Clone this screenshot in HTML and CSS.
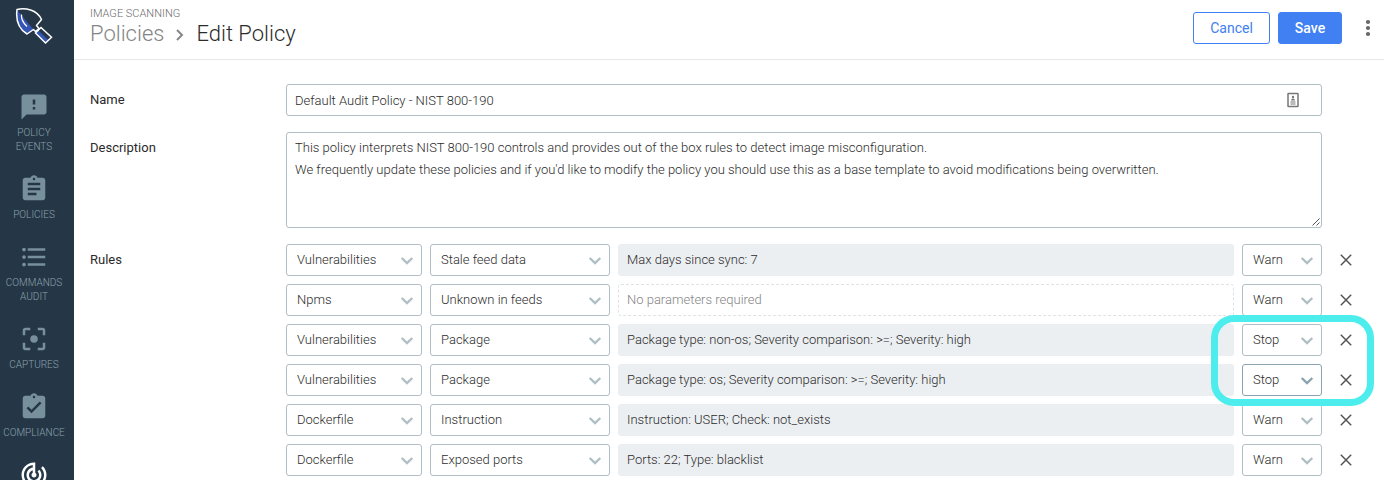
FILE: index.html
```html
<!DOCTYPE html>
<html lang="en">
<head>
<meta charset="utf-8">
<title>Edit Policy</title>
<link rel="stylesheet" href="styles.css">
</head>
<body>
<svg class="defs" width="0" height="0">
  <symbol id="chevron" viewBox="0 0 14 10"><path d="M1.700 2l5.300 5 5.300-5" fill="none" stroke="currentColor" stroke-width="2.400"/></symbol>
  <symbol id="cross" viewBox="0 0 12 12"><path d="M.8.8l10.400 10.400M11.200.8L.8 11.200" fill="none" stroke="currentColor" stroke-width="1.500"/></symbol>
</svg>
<div class="app">
  <nav class="sidebar">
    <svg class="logo" viewBox="0 0 38 38">
      <path d="M2 3L18.500 22.500L12 27C4 22 1.500 14 2 3z" fill="#3555b5"/>
      <path d="M23.200 23.200L33.500 33.200L30.500 36L20.500 26z" fill="#3555b5"/>
      <path d="M2 2.500C10 .5 22 2.500 26.500 12.500L21.500 18.500L24 21.500L20.500 24.500L18.500 22.500L12 27C4 22 .5 14 2 2.500z" fill="none" stroke="#fff" stroke-width="1.500" stroke-linejoin="round"/>
      <path d="M26 20.500L36.500 30.300L30.500 36L20.500 26z" fill="none" stroke="#fff" stroke-width="1.500"/>
      <path d="M6.500 7.500Q6 14 12 19.500" fill="none" stroke="#fff" stroke-width="1.300"/>
    </svg>
    <a class="item"><svg viewBox="0 0 24 24"><path d="M20 2H4c-1.100 0-2 .9-2 2v18l4-4h14c1.100 0 2-.9 2-2V4c0-1.100-.9-2-2-2zm-7 12h-2v-2h2v2zm0-4h-2V6h2v4z"/></svg><span>POLICY<br>EVENTS</span></a>
    <a class="item"><svg viewBox="0 0 24 24"><path d="M19 3h-4.180C14.400 1.840 13.300 1 12 1c-1.300 0-2.400.84-2.820 2H5c-1.100 0-2 .9-2 2v14c0 1.100.9 2 2 2h14c1.100 0 2-.9 2-2V5c0-1.100-.9-2-2-2zm-7 0c.55 0 1 .45 1 1s-.45 1-1 1-1-.45-1-1 .45-1 1-1zm2 14H7v-2h7v2zm3-4H7v-2h10v2zm0-4H7V7h10v2z"/></svg><span>POLICIES</span></a>
    <a class="item"><svg viewBox="0 0 24 24"><path d="M4 10.500c-.83 0-1.500.67-1.500 1.500s.67 1.500 1.500 1.500 1.500-.67 1.500-1.500-.67-1.500-1.500-1.500zm0-6c-.83 0-1.500.67-1.500 1.500S3.170 7.500 4 7.500 5.500 6.830 5.500 6 4.830 4.500 4 4.500zm0 12c-.83 0-1.500.68-1.500 1.500s.68 1.500 1.500 1.500 1.500-.68 1.500-1.500-.67-1.500-1.500-1.500zM7 19h14v-2H7v2zm0-6h14v-2H7v2zm0-8v2h14V5H7z"/></svg><span>COMMANDS<br>AUDIT</span></a>
    <a class="item"><svg viewBox="0 0 24 24"><circle cx="12" cy="12" r="3"/><path d="M5 15H3v4c0 1.100.9 2 2 2h4v-2H5v-4zM5 5h4V3H5c-1.100 0-2 .9-2 2v4h2V5zm14-2h-4v2h4v4h2V5c0-1.100-.9-2-2-2zm0 16h-4v2h4c1.100 0 2-.9 2-2v-4h-2v4z"/></svg><span>CAPTURES</span></a>
    <a class="item"><svg viewBox="0 0 24 24"><path d="M19 3h-4.180C14.400 1.840 13.300 1 12 1c-1.300 0-2.400.84-2.820 2H5c-1.100 0-2 .9-2 2v14c0 1.100.9 2 2 2h14c1.100 0 2-.9 2-2V5c0-1.100-.9-2-2-2zm-7 0c.55 0 1 .45 1 1s-.45 1-1 1-1-.45-1-1 .45-1 1-1zm-2 14l-4-4 1.410-1.410L10 14.170l6.590-6.590L18 9l-8 8z"/></svg><span>COMPLIANCE</span></a>
    <a class="item active"><svg viewBox="0 0 24 24"><path d="M19.070 4.930l-1.410 1.410C19.100 7.790 20 9.790 20 12c0 4.420-3.580 8-8 8s-8-3.580-8-8c0-4.080 3.050-7.440 7-7.930v2.020C8.160 6.570 6 9.030 6 12c0 3.310 2.690 6 6 6s6-2.690 6-6c0-1.660-.67-3.160-1.760-4.240l-1.410 1.410C15.550 9.900 16 10.900 16 12c0 2.210-1.790 4-4 4s-4-1.790-4-4c0-1.860 1.280-3.410 3-3.860v2.140c-.6.35-1 .98-1 1.720 0 1.100.9 2 2 2s2-.9 2-2c0-.74-.4-1.380-1-1.720V2h-1C6.480 2 2 6.480 2 12s4.480 10 10 10 10-4.480 10-10c0-2.760-1.120-5.260-2.930-7.070z"/></svg></a>
  </nav>
  <main class="main">
    <header class="header">
      <div class="titles">
        <div class="eyebrow">IMAGE SCANNING</div>
        <h1 class="crumbs"><span class="parent">Policies</span><svg class="sep" viewBox="0 0 8 14"><path d="M1 2l5 5-5 5" fill="none" stroke="currentColor" stroke-width="2"/></svg><span>Edit Policy</span></h1>
      </div>
      <div class="actions">
        <button class="btn">Cancel</button>
        <button class="btn primary">Save</button>
        <svg class="more" viewBox="0 0 6 18"><circle cx="3" cy="3" r="2.100"/><circle cx="3" cy="9" r="2.100"/><circle cx="3" cy="15" r="2.100"/></svg>
      </div>
    </header>
    <form class="form">
      <div class="label">Name</div>
      <div class="field name"><span>Default Audit Policy - NIST 800-190</span>
        <svg class="card" viewBox="0 0 12 16"><rect x="1" y="1.500" width="10" height="13" rx=".5" fill="#fff" stroke="#777" stroke-width="1.500"/><circle cx="6" cy="5" r="1.200" fill="#777"/><path d="M4 8.500q0-2 2-2t2 2zM3.500 9.500h5v1h-5zM3.500 11.500h5v1h-5z" fill="#777"/></svg>
      </div>
      <div class="label">Description</div>
      <div class="field description">This policy interprets NIST 800-190 controls and provides out of the box rules to detect image misconfiguration.<br>We frequently update these policies and if you'd like to modify the policy you should use this as a base template to avoid modifications being overwritten.
        <svg class="grip" viewBox="0 0 8 8"><path d="M.5 7.500l7-7M4.500 7.500l3-3" stroke="#555" fill="none"/></svg>
      </div>
      <div class="label">Rules</div>
      <div class="rules">
        <div class="rule"><div class="select"><span>Vulnerabilities</span><svg><use href="#chevron"/></svg></div><div class="select"><span>Stale feed data</span><svg><use href="#chevron"/></svg></div><div class="params">Max days since sync: 7</div><div class="select"><span>Warn</span><svg><use href="#chevron"/></svg></div><svg class="remove"><use href="#cross"/></svg></div>
        <div class="rule"><div class="select"><span>Npms</span><svg><use href="#chevron"/></svg></div><div class="select"><span>Unknown in feeds</span><svg><use href="#chevron"/></svg></div><div class="params empty">No parameters required</div><div class="select"><span>Warn</span><svg><use href="#chevron"/></svg></div><svg class="remove"><use href="#cross"/></svg></div>
        <div class="rule"><div class="select"><span>Vulnerabilities</span><svg><use href="#chevron"/></svg></div><div class="select"><span>Package</span><svg><use href="#chevron"/></svg></div><div class="params">Package type: non-os; Severity comparison: &gt;=; Severity: high</div><div class="select"><span>Stop</span><svg><use href="#chevron"/></svg></div><svg class="remove"><use href="#cross"/></svg></div>
        <div class="rule"><div class="select"><span>Vulnerabilities</span><svg><use href="#chevron"/></svg></div><div class="select"><span>Package</span><svg><use href="#chevron"/></svg></div><div class="params">Package type: os; Severity comparison: &gt;=; Severity: high</div><div class="select focused"><span>Stop</span><svg><use href="#chevron"/></svg></div><svg class="remove"><use href="#cross"/></svg></div>
        <div class="rule"><div class="select"><span>Dockerfile</span><svg><use href="#chevron"/></svg></div><div class="select"><span>Instruction</span><svg><use href="#chevron"/></svg></div><div class="params">Instruction: USER; Check: not_exists</div><div class="select"><span>Warn</span><svg><use href="#chevron"/></svg></div><svg class="remove"><use href="#cross"/></svg></div>
        <div class="rule"><div class="select"><span>Dockerfile</span><svg><use href="#chevron"/></svg></div><div class="select"><span>Exposed ports</span><svg><use href="#chevron"/></svg></div><div class="params">Ports: 22; Type: blacklist</div><div class="select"><span>Warn</span><svg><use href="#chevron"/></svg></div><svg class="remove"><use href="#cross"/></svg></div>
        <div class="highlight"></div>
      </div>
    </form>
  </main>
</div>
</body>
</html>
```
FILE: styles.css
```css
* { box-sizing: border-box; }
body { margin: 0; font-family: Roboto, sans-serif; font-size: 13px; font-weight: 300; color: #2b2b2b; background: #fff; overflow: hidden; }
.defs { position: absolute; }
.app { display: flex; height: 480px; overflow: hidden; }
.sidebar { flex: none; width: 74px; padding-right: 6px; background: #253746; display: flex; flex-direction: column; align-items: center; gap: 20px; }
.logo { width: 38px; height: 38px; margin: 7px 0 27px; flex: none; }
.item { display: flex; flex-direction: column; align-items: center; gap: 4px; flex: none; font-size: 10px; line-height: 14px; text-align: center; color: #8ba1ad; }
.item svg { width: 30px; height: 30px; fill: #78909c; }
.item.active svg { fill: #fff; }
.main { flex: 1; min-width: 0; }
.header { height: 60px; border-bottom: 1px solid #e6e8ea; padding: 6px 13px 0 16px; display: flex; justify-content: space-between; }
.titles { padding-top: 1px; }
.eyebrow { font-size: 11px; line-height: 14px; color: #6c6c6c; }
.crumbs { margin: 0; font-size: 22px; font-weight: 300; line-height: 26px; display: flex; align-items: center; }
.parent { color: #858585; }
.sep { width: 8px; height: 14px; margin: 1px 12px 0; color: #888; }
.actions { display: flex; padding-top: 6px; }
.btn { height: 32px; width: 77px; margin-right: 8px; padding: 0; border: 1px solid #4080f3; border-radius: 3px; background: #fff; color: #4080f3; font: 400 14px Roboto, sans-serif; }
.btn.primary { width: 64px; background: #4080f3; color: #fff; font-weight: 500; margin-right: 23px; }
.more { width: 6px; height: 18px; margin-top: 7px; fill: #666; }
.form { display: grid; grid-template-columns: 196px 1fr; row-gap: 16px; padding: 24px 30px 0 16px; }
.label { font-weight: 400; line-height: 32px; }
.field { width: 1036px; border: 1px solid #b0bec5; border-radius: 3px; padding: 0 8px; }
.name { height: 32px; display: flex; align-items: center; justify-content: space-between; padding-right: 22px; }
.card { width: 12px; height: 16px; }
.description { height: 96px; line-height: 22px; padding-top: 4px; position: relative; }
.grip { position: absolute; right: 1px; bottom: 1px; width: 8px; height: 8px; }
.rules { position: relative; display: flex; flex-direction: column; gap: 8px; }
.rule { display: grid; grid-template-columns: 136px 180px 616px 80px 12px; column-gap: 8px; height: 32px; align-items: center; }
.select { height: 32px; border: 1px solid #b0bec5; border-radius: 3px; padding: 0 7px 0 10px; display: flex; align-items: center; justify-content: space-between; }
.select span { padding-bottom: 2px; }
.select svg { width: 14px; height: 10px; color: #b0bec5; margin-top: 2px; }
.select.focused { border-color: #8ba3b1; }
.select.focused svg { color: #8ba3b1; }
.params { height: 32px; line-height: 32px; padding: 0 9px; background: #ebeff2; border-radius: 3px; }
.params.empty { background: none; border: 1px dashed #dfe3e6; line-height: 30px; padding: 0 8px; color: #858585; }
.remove { width: 12px; height: 12px; margin-left: 10px; color: #555; }
.highlight { position: absolute; left: 925px; top: 71px; width: 163px; height: 91px; border: 7px solid #4eeded; border-radius: 23px; }
```
